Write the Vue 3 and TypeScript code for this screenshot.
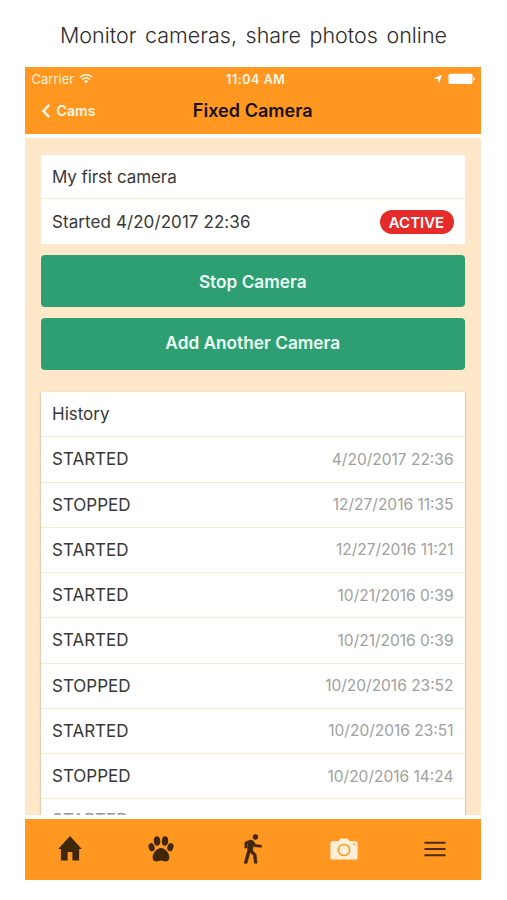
<script setup lang="ts">
interface HistoryItem {
  status: string
  time: string
}

const history: HistoryItem[] = [
  { status: 'STARTED', time: '4/20/2017 22:36' },
  { status: 'STOPPED', time: '12/27/2016 11:35' },
  { status: 'STARTED', time: '12/27/2016 11:21' },
  { status: 'STARTED', time: '10/21/2016 0:39' },
  { status: 'STARTED', time: '10/21/2016 0:39' },
  { status: 'STOPPED', time: '10/20/2016 23:52' },
  { status: 'STARTED', time: '10/20/2016 23:51' },
  { status: 'STOPPED', time: '10/20/2016 14:24' },
  { status: 'STARTED', time: '' },
]
</script>

<template>
  <div class="page">
    <h1 class="headline">Monitor cameras, share photos online</h1>
    <div class="phone">
      <header class="header">
        <div class="status">
          <div class="carrier">
            <span>Carrier</span>
            <svg class="wifi" viewBox="0 0 14 11" width="14" height="11">
              <g fill="none" stroke="currentColor" stroke-width="1.7">
                <path d="M1 4.1C4.4.7 9.6.7 13 4.1" />
                <path d="M3.3 6.5c2.1-2.1 5.3-2.1 7.4 0" />
              </g>
              <path d="M7 10.6 4.8 8.2c1.2-1.2 3.2-1.2 4.4 0z" fill="currentColor" />
            </svg>
          </div>
          <div class="clock">11:04 AM</div>
          <div class="power">
            <svg viewBox="0 0 10 10" width="10" height="10"><path d="M9.4.4 5.6 9.6 5 5 .4 4.4z" fill="#fff" /></svg>
            <svg viewBox="0 0 28 12" width="28" height="12">
              <rect x=".5" y=".7" width="24" height="10.4" rx="1.6" fill="#fff" />
              <path d="M25.4 4c1.9.5 1.9 3.3 0 3.8z" fill="#fff" />
            </svg>
          </div>
        </div>
        <div class="nav">
          <button class="back">
            <svg viewBox="0 0 10 16" width="10" height="16"><path d="M8.2 1.8 2.4 8l5.8 6.2" fill="none" stroke="currentColor" stroke-width="2.5" /></svg>
            <span>Cams</span>
          </button>
          <div class="title">Fixed Camera</div>
        </div>
      </header>

      <main class="content">
        <section class="camera">
          <div class="row"><span class="name">My first camera</span></div>
          <div class="row">
            <span class="started">Started 4/20/2017 22:36</span>
            <span class="badge">ACTIVE</span>
          </div>
        </section>
        <button class="action stop">Stop Camera</button>
        <button class="action add">Add Another Camera</button>
        <section class="history">
          <div class="row"><span class="heading">History</span></div>
          <div v-for="(item, index) in history" :key="index" class="row">
            <span class="state">{{ item.status }}</span>
            <time>{{ item.time }}</time>
          </div>
        </section>
      </main>

      <nav class="tabs">
        <div class="tab">
          <svg viewBox="0 0 24 25" width="24" height="25"><path d="M12 0 .2 13.1h2.7v11.4h6.7v-8.4h4.8v8.4h6.7V13.1h2.7z" fill="#402708" /></svg>
        </div>
        <div class="tab">
          <svg viewBox="0 0 26 26" width="26" height="26" fill="#402708">
            <ellipse cx="3.6" cy="11.2" rx="3" ry="4.1" transform="rotate(-18 3.6 11.2)" />
            <ellipse cx="9" cy="5" rx="3.2" ry="4.7" transform="rotate(-5 9 5)" />
            <ellipse cx="17" cy="5" rx="3.2" ry="4.7" transform="rotate(5 17 5)" />
            <ellipse cx="22.4" cy="11.2" rx="3" ry="4.1" transform="rotate(18 22.4 11.2)" />
            <path d="M13 12c-4.1 0-8.4 5.2-8.4 9.5 0 2.5 1.6 3.9 3.8 3.9 1.9 0 2.7-1 4.6-1s2.7 1 4.6 1c2.2 0 3.8-1.4 3.8-3.9 0-4.3-4.3-9.5-8.4-9.5z" />
          </svg>
        </div>
        <div class="tab">
          <svg viewBox="0 0 20 30" width="20" height="30">
            <circle cx="12.4" cy="3" r="2.7" fill="#402708" />
            <path d="M1.8 14V8.2L6 6.4q2.6-1 4.4.6l2.2 3.5 6 .7v2.1l-7-.5-1.2-1.3-.8 4.8 3.6 4.1.9 8.9h-2.7l-1-7.7-3.3-3.3-3 11H1.1l3.2-12L5.3 9.1 4.2 10v4z" fill="#402708" stroke="#402708" stroke-width=".5" stroke-linejoin="round" />
          </svg>
        </div>
        <div class="tab">
          <svg viewBox="0 0 28 22" width="28" height="22">
            <path d="M2 3.3h6.2l1.7-2.1Q10.6.5 11.6.5h4.8q1 0 1.7.7l1.7 2.1H26q1.6 0 1.6 1.6v14.9q0 1.6-1.6 1.6H2Q.4 21.4.4 19.8V4.9Q.4 3.3 2 3.3z" fill="#ffefd8" />
            <circle cx="14" cy="12" r="5.6" fill="none" stroke="#ff9720" stroke-width="1.5" />
            <circle cx="24.2" cy="6.4" r=".9" fill="#ff9720" />
          </svg>
        </div>
        <div class="tab">
          <svg viewBox="0 0 22 16" width="22" height="16"><path d="M1.2 1.8h19.6M1.2 8h19.6M1.2 14.2h19.6" fill="none" stroke="#4c2b06" stroke-width="2" stroke-linecap="round" /></svg>
        </div>
      </nav>
    </div>
  </div>
</template>

<style>
body {
  margin: 0;
  background: #fff;
}
</style>

<style scoped>
.page {
  box-sizing: border-box;
  width: 507px;
  height: 900px;
  overflow: hidden;
  background: #fff;
  font-family: Inter, "Liberation Sans", sans-serif;
}

button {
  padding: 0;
  border: 0;
  font-family: inherit;
}

svg {
  display: block;
  flex: none;
}

.headline {
  margin: 0;
  height: 67px;
  line-height: 70px;
  text-align: center;
  font-size: 21.5px;
  font-weight: 300;
  word-spacing: 2.5px;
  color: #2c2c2c;
  white-space: nowrap;
}

.phone {
  width: 456.5px;
  height: 813px;
  margin-left: 24.5px;
  display: flex;
  flex-direction: column;
  gap: 4px;
}

.header {
  height: 67px;
  flex: none;
  background: #ff9720;
}

.status {
  height: 23px;
  display: grid;
  grid-template-columns: 1fr auto 1fr;
  align-items: center;
  padding: 0 5px 0 7px;
  font-size: 13px;
  color: #fff;
}

.carrier {
  display: flex;
  align-items: center;
  gap: 5px;
  color: #fff1d5;
}

.clock {
  padding: 1px 0 0 4px;
  font-weight: 600;
  font-size: 12.5px;
  letter-spacing: 0.55px;
  color: #fff8e9;
}

.power {
  display: flex;
  justify-content: flex-end;
  align-items: center;
  gap: 5px;
}

.nav {
  height: 41px;
  display: grid;
  grid-template-columns: 1fr auto 1fr;
  align-items: center;
  padding: 0 16px;
}

.back {
  display: flex;
  align-items: center;
  gap: 6px;
  background: none;
  color: #fff7e5;
  font-size: 14px;
  font-weight: 600;
  letter-spacing: 0.1px;
}

.title {
  font-size: 18px;
  font-weight: 600;
  line-height: 20px;
  padding-top: 1px;
  letter-spacing: 0.05px;
  color: #151008;
}

.content {
  box-sizing: border-box;
  height: 677px;
  flex: none;
  padding: 16.5px 16.5px 0;
  overflow: hidden;
  background: #ffe8ca;
}

.row {
  box-sizing: border-box;
  height: 45.25px;
  display: flex;
  align-items: center;
  justify-content: space-between;
  padding: 0 11px;
  border-bottom: 1.5px solid #ffe8ca;
  background: #fff;
  font-size: 17px;
  color: #383838;
  white-space: nowrap;
}

.camera .row {
  height: 44.75px;
  padding-top: 1px;
}

.camera .row:last-child {
  border-bottom: 0;
}

.started {
  letter-spacing: 0.08px;
}

.name {
  letter-spacing: -0.1px;
}

.badge {
  height: 24px;
  width: 74px;
  border-radius: 12px;
  background: #e62b2b;
  color: #fff;
  font-size: 15px;
  font-weight: 600;
  line-height: 25px;
  text-align: center;
}

.action {
  display: block;
  width: 100%;
  height: 52px;
  margin-top: 10.5px;
  border-radius: 4px;
  background: #2e9f73;
  color: #edfff5;
  font-size: 17.25px;
  font-weight: 600;
}

.stop {
  padding-top: 1px;
}

.add {
  margin-top: 11px;
  padding-bottom: 2px;
}

.history {
  margin-top: 22.5px;
  box-shadow: 0 1px 2px rgba(80, 50, 20, 0.45);
}

.history .row:last-child {
  padding-bottom: 2px;
  color: #999;
}

time {
  font-size: 15.5px;
  color: #a0a0a0;
}

.tabs {
  height: 60.5px;
  flex: none;
  display: grid;
  grid-template-columns: repeat(5, 1fr);
  background: #ff9720;
}

.tab {
  display: flex;
  align-items: center;
  justify-content: center;
  padding-bottom: 1px;
}
</style>
